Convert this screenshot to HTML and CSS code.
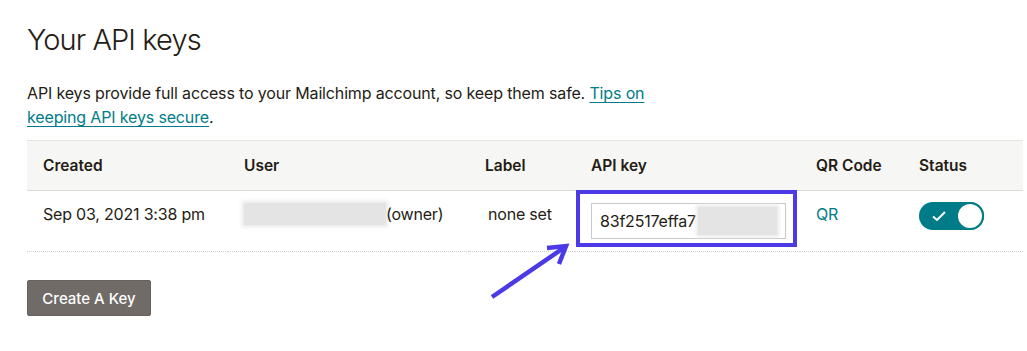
FILE: index.html
```html
<!DOCTYPE html>
<html lang="en">
<head>
    <meta charset="UTF-8">
    <meta name="viewport" content="width=device-width, initial-scale=1.0">
    <title>API keys</title>
    <link rel="stylesheet" href="styles.css">
</head>
<body>
    <div class="page">
        <h1>Your API keys</h1>
        <p class="intro">API keys provide full access to your Mailchimp account, so keep them safe. <a href="#">Tips on keeping API keys secure</a>.</p>

        <table class="keys">
            <thead>
                <tr>
                    <th class="col-created">Created</th>
                    <th class="col-user">User</th>
                    <th class="col-label">Label</th>
                    <th class="col-key">API key</th>
                    <th class="col-qr">QR Code</th>
                    <th class="col-status">Status</th>
                </tr>
            </thead>
            <tbody>
                <tr>
                    <td>Sep 03, 2021 3:38 pm</td>
                    <td><span class="blurred user-blur"></span>(owner)</td>
                    <td class="label-cell">none set</td>
                    <td>
                        <div class="key-wrap">
                            <div class="key-input">83f2517effa7<span class="blurred key-blur"></span></div>
                            <span class="highlight"></span>
                        </div>
                    </td>
                    <td><a href="#" class="qr">QR</a></td>
                    <td>
                        <span class="toggle">
                            <svg class="check" width="16" height="12" viewBox="0 0 16 12"><path d="M2 6.5 L6 10 L14 2" fill="none" stroke="#fff" stroke-width="2"/></svg>
                            <span class="knob"></span>
                        </span>
                    </td>
                </tr>
            </tbody>
        </table>

        <button class="btn">Create A Key</button>

        <!-- annotation arrow -->
        <svg class="arrow" width="90" height="65" viewBox="0 0 90 65">
            <path d="M7 57 L80 7" stroke="#4b3ae6" stroke-width="4.5" fill="none"/>
            <path d="M62 8 L81 6 L74 24" stroke="#4b3ae6" stroke-width="4.5" fill="none"/>
        </svg>
    </div>
</body>
</html>
```

FILE: styles.css
```css
* {
    margin: 0;
    padding: 0;
    box-sizing: border-box;
}

body {
    font-family: 'Inter', 'Liberation Sans', sans-serif;
    background: #fff;
    color: #241c15;
    width: 1027px;
    height: 351px;
    overflow: hidden;
}

.page {
    position: relative;
    padding: 22px 0 0 27px;
}

h1 {
    font-size: 29px;
    font-weight: 300;
    line-height: 36px;
    letter-spacing: -0.9px;
}

.intro {
    font-size: 16px;
    line-height: 24px;
    margin-top: 23px;
    max-width: 640px;
    letter-spacing: -0.15px;
}

.intro a {
    color: #007c89;
    text-decoration: underline;
    text-underline-offset: 3px;
}

/* Table */
.keys {
    width: 996px;
    margin-top: 11px;
    border-collapse: collapse;
    table-layout: fixed;
}

.keys th {
    background: #f6f6f4;
    border-top: 1px solid #e6e4e0;
    border-bottom: 1px solid #dcdad5;
    height: 50px;
    text-align: left;
    font-size: 15.5px;
    font-weight: 600;
    padding: 0 16px;
}

.col-created { width: 201px; }
.col-user { width: 241px; }
.col-label { width: 106px; }
.col-key { width: 225px; }
.col-qr { width: 103px; }
.col-status { width: 120px; }

.keys td {
    font-size: 16px;
    line-height: 24px;
    letter-spacing: -0.2px;
    padding: 11px 16px 12px;
    vertical-align: top;
    border-bottom: 1px dotted #cfcfcf;
    white-space: nowrap;
}

.label-cell {
    padding-left: 19px !important;
}

.blurred {
    display: inline-block;
    background: #e4e4e4;
    box-shadow: 0 0 4px 2px #e9e9e9;
    vertical-align: top;
}

.user-blur {
    width: 142px;
    height: 22px;
    margin-top: 1px;
}

.key-wrap {
    position: relative;
    padding-top: 1px;
}

.key-input {
    width: 195px;
    height: 36px;
    border: 1px solid #c9c9c9;
    padding: 0 8px;
    line-height: 34px;
    font-size: 16px;
    display: flex;
    align-items: center;
}

.key-blur {
    width: 84px;
    height: 28px;
    margin-left: 2px;
}

.highlight {
    position: absolute;
    left: -15px;
    top: -12px;
    width: 221px;
    height: 57px;
    border: 4px solid #4b3ae6;
}

.qr {
    color: #007c89;
    text-decoration: none;
}

/* Toggle */
.toggle {
    display: flex;
    align-items: center;
    justify-content: space-between;
    width: 65px;
    height: 28px;
    background: #007c89;
    border-radius: 14px;
    padding-left: 12px;
}

.knob {
    width: 28px;
    height: 28px;
    border-radius: 50%;
    background: #fff;
    border: 2px solid #007c89;
}

.btn {
    display: block;
    margin-top: 28px;
    width: 124px;
    height: 36px;
    background: #706b67;
    color: #fff;
    border: 1px solid #66615d;
    border-radius: 2px;
    font-family: 'Inter', 'Liberation Sans', sans-serif;
    font-size: 15px;
    font-weight: 500;
}

.arrow {
    position: absolute;
    left: 485px;
    top: 240px;
}
```
